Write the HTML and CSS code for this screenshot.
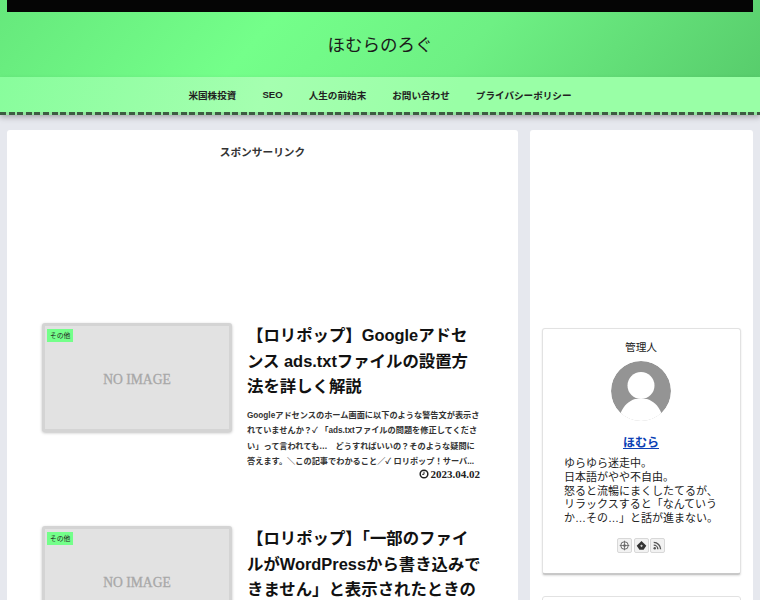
FILE: index.html
```html
<!DOCTYPE html>
<html lang="ja">
<head>
  <meta charset="UTF-8">
  <title>ほむらのろぐ</title>
  <link rel="stylesheet" href="styles.css">
</head>
<body>

  <header class="site-header">
    <div class="top-bar"></div>
    <div class="site-title">ほむらのろぐ</div>
  </header>

  <nav class="global-nav">
    <a href="#">米国株投資</a>
    <a href="#">SEO</a>
    <a href="#">人生の前始末</a>
    <a href="#">お問い合わせ</a>
    <a href="#">プライバシーポリシー</a>
  </nav>

  <div class="content">
    <main class="main">
      <div class="ad-label">スポンサーリンク</div>
      <div class="ad-space"></div>

      <article class="entry">
        <div class="thumb">
          <span class="cat">その他</span>
          <span class="no-image">NO IMAGE</span>
        </div>
        <div class="entry-body">
          <h2>【ロリポップ】Googleアドセ<br>ンス ads.txtファイルの設置方<br>法を詳しく解説</h2>
          <p class="snippet">Googleアドセンスのホーム画面に以下のような警告文が表示さ<br>れていませんか？✓ 「ads.txtファイルの問題を修正してくださ<br>い」って言われても…　どうすればいいの？そのような疑問に<br>答えます。＼この記事でわかること／✓ ロリポップ！サーバ...</p>
          <div class="date">
            <svg viewBox="0 0 12 12" width="10" height="10"><circle cx="6" cy="6" r="4.6" fill="none" stroke="#222" stroke-width="1.8"/><path d="M6 3.2V6.4H3.8" fill="none" stroke="#222" stroke-width="1.2"/></svg>
            2023.04.02
          </div>
        </div>
      </article>

      <article class="entry">
        <div class="thumb">
          <span class="cat">その他</span>
          <span class="no-image">NO IMAGE</span>
        </div>
        <div class="entry-body">
          <h2>【ロリポップ】「一部のファイ<br>ルがWordPressから書き込みで<br>きません」と表示されたときの</h2>
        </div>
      </article>
    </main>

    <aside class="sidebar">
      <div class="side-ad">
        <div class="profile">
          <div class="profile-title">管理人</div>
          <svg class="avatar" viewBox="0 0 60 60" width="60" height="60">
            <circle cx="30" cy="30" r="30" fill="#949494"/>
            <circle cx="30" cy="24.5" r="13.5" fill="#fff"/>
            <path d="M9.6 52C13 44 18 40 24 38H36C42 40 47 44 50.4 52Z" fill="#fff"/>
            <rect x="0" y="52" width="60" height="8" fill="#fff"/>
          </svg>
          <a class="profile-name" href="#">ほむら</a>
          <p class="profile-text">ゆらゆら迷走中。<br>日本語がやや不自由。<br>怒ると流暢にまくしたてるが、<br>リラックスすると「なんていうか…その…」と話が進まない。</p>
          <div class="sns">
            <a href="#"><svg viewBox="0 0 16 16" width="11" height="11"><circle cx="8" cy="8" r="5.5" fill="none" stroke="#666" stroke-width="1.4"/><path d="M8 1V15M1 8H15" stroke="#666" stroke-width="1.2"/><circle cx="8" cy="8" r="2" fill="#666"/></svg></a>
            <a href="#"><svg viewBox="0 0 16 16" width="11" height="11"><path d="M8 1.5L15 8.5 11 14H5L1 8.5Z" fill="#333"/><path d="M8 6.5L10 8.5 8 10.5 6 8.5Z" fill="#ccc"/></svg></a>
            <a href="#"><svg viewBox="0 0 16 16" width="11" height="11"><circle cx="4" cy="12" r="1.8" fill="#555"/><path d="M2.5 7.5A6 6 0 0 1 8.5 13.5M2.5 3.5A10 10 0 0 1 12.5 13.5" fill="none" stroke="#555" stroke-width="2"/></svg></a>
          </div>
        </div>
        <div class="next-widget"></div>
      </div>
    </aside>
  </div>

</body>
</html>
```

FILE: styles.css
```css
html, body {
  height: 600px;
  overflow: hidden;
}

body {
  margin: 0;
  background-color: #e6e8ee;
  color: #222;
  font-family: "Liberation Sans", "Noto Sans CJK JP", sans-serif;
}

a {
  color: inherit;
  text-decoration: none;
}

/* header */
.site-header {
  height: 77px;
  padding: 0 7px;
  background: linear-gradient(130deg, #66e87c 0%, #74ff8a 35%, #6ef084 62%, #58cd6c 100%);
}

.top-bar {
  height: 12px;
  background-color: #050505;
}

.site-title {
  margin-top: 20px;
  font-size: 17.5px;
  line-height: 26px;
  text-align: center;
  color: #1a1a1a;
}

.global-nav {
  display: flex;
  justify-content: center;
  gap: 26px;
  height: 36px;
  box-sizing: border-box;
  padding-bottom: 1px;
  align-items: center;
  position: relative;
  background: linear-gradient(110deg, #88fd9c 0%, #a5ffb0 35%, #99ffa6 60%, #99ffa6 100%);
  box-shadow: 0 4px 6px rgba(0, 0, 0, 0.3);
  font-size: 9.6px;
  font-weight: bold;
}

.global-nav::after {
  content: "";
  position: absolute;
  left: 0;
  right: 0;
  bottom: -2px;
  height: 3px;
  background: repeating-linear-gradient(90deg, #3d5c42 0, #3d5c42 6px, #93e59f 6px, #93e59f 8.6px);
}

/* layout */
.content {
  display: flex;
  gap: 12px;
  padding: 17px 7px 0;
}

.main {
  width: 511px;
  height: 600px;
  flex-shrink: 0;
  background-color: #fff;
  border-radius: 3px;
}

.sidebar {
  width: 223px;
}

.side-ad {
  height: 600px;
  padding: 198px 12px 0;
  box-sizing: border-box;
  background-color: #fff;
  border-radius: 3px;
}

.ad-label {
  padding-top: 15px;
  font-size: 10.7px;
  line-height: 14px;
  font-weight: bold;
  color: #333;
  text-align: center;
}

.ad-space {
  height: 164px;
}

/* entries */
.entry {
  display: flex;
  gap: 15px;
  padding: 0 36px 0 35px;
  height: 203px;
}

.thumb {
  position: relative;
  width: 190px;
  height: 109px;
  flex-shrink: 0;
  box-sizing: border-box;
  display: flex;
  align-items: center;
  justify-content: center;
  background-color: #e2e2e2;
  border: 3px solid #d4d4d4;
  border-radius: 3px;
  box-shadow: 0 1px 3px rgba(0, 0, 0, 0.25);
}

.cat {
  position: absolute;
  top: 3px;
  left: 2px;
  padding: 0 3px;
  height: 13px;
  line-height: 13px;
  background-color: #74ff8a;
  font-size: 6.8px;
}

.no-image {
  margin-top: 5px;
  font-family: "Liberation Serif", serif;
  font-size: 13.6px;
  color: #a8a8a8;
  -webkit-text-stroke: 0.3px #a8a8a8;
}

.entry-body {
  width: 235px;
  white-space: nowrap;
}

.entry-body h2 {
  margin: 0;
  font-size: 16.4px;
  line-height: 25.5px;
  font-weight: bold;
  color: #111;
}

.snippet {
  margin: 8px 0 0;
  font-size: 8.2px;
  line-height: 15.5px;
  font-weight: bold;
  color: #333;
}

.date {
  display: flex;
  justify-content: flex-end;
  align-items: center;
  gap: 2px;
  margin-top: -3px;
  padding-right: 2px;
  font-family: "Liberation Serif", serif;
  font-size: 11px;
  font-weight: bold;
  line-height: 14px;
}

/* profile */
.profile {
  height: 247px;
  box-sizing: border-box;
  padding: 11px 21px 0 20px;
  border: 1px solid #e2e2e2;
  border-bottom: 2px solid #c8c8c8;
  border-radius: 3px;
  box-shadow: 0 1px 2px rgba(0, 0, 0, 0.12);
}

.profile-title {
  font-size: 10.7px;
  line-height: 14px;
  text-align: center;
}

.avatar {
  display: block;
  margin: 7px auto 0;
  clip-path: circle(30px);
}

.profile-name {
  display: block;
  margin-top: 12px;
  font-size: 12px;
  line-height: 20px;
  font-weight: bold;
  text-align: center;
  color: #0b3fb5;
  text-decoration: underline;
}

.profile-text {
  margin: 4px 0 0 1px;
  font-size: 11px;
  line-height: 13.8px;
}

.sns {
  display: flex;
  justify-content: center;
  gap: 1.5px;
  margin-top: 12px;
}

.sns a {
  display: flex;
  align-items: center;
  justify-content: center;
  width: 13px;
  height: 13px;
  border: 1px solid #d8d8d8;
  border-radius: 2px;
  background-color: #f2f2f2;
}

.next-widget {
  height: 60px;
  margin-top: 21px;
  border: 1px solid #e2e2e2;
  border-radius: 3px;
}
```
